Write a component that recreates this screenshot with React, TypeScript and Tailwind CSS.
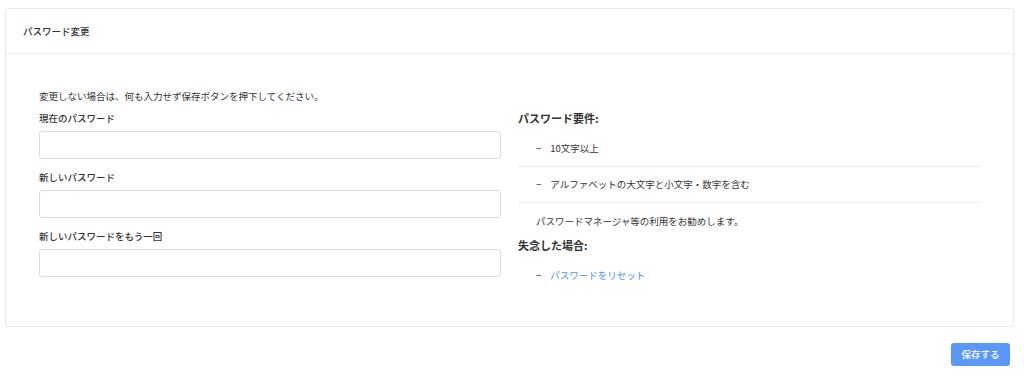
import React from 'react';

const font = { fontFamily: '"Noto Sans CJK JP", "Noto Sans", sans-serif' };

const PasswordField: React.FC<{ label: string }> = ({ label }) => (
  <div className="flex flex-col">
    <label className="h-[19px] flex items-center text-[9.5px] font-medium text-[#333]">{label}</label>
    <input
      type="password"
      className="mt-[3px] h-[28px] w-full rounded-[3px] border border-[#dcdcdc] bg-white px-2 text-[10px] outline-none"
    />
  </div>
);

export default function App() {
  return (
    <div className="min-h-[376px] w-[1024px] bg-white text-[#333]" style={font}>
      <div className="ml-[5px] mt-[8px] w-[1009px] rounded-[3px] border border-[#e8e8e8] bg-white">
        <div className="flex h-[45px] items-center border-b border-[#ececec] px-[17px]">
          <h2 className="text-[9.5px] font-medium text-[#333]">パスワード変更</h2>
        </div>

        <div className="px-[33px] pt-[35px] pb-[38px]">
          <p className="flex h-[14px] items-center text-[9.5px] text-[#333]">
            変更しない場合は、何も入力せず保存ボタンを押下してください。
          </p>

          <div className="mt-[6px] grid grid-cols-2 gap-[17px]">
            <div className="flex flex-col gap-[9px]">
              <PasswordField label="現在のパスワード" />
              <PasswordField label="新しいパスワード" />
              <PasswordField label="新しいパスワードをもう一回" />
            </div>

            <div className="flex flex-col">
              <h3 className="flex h-[19px] items-center text-[11px] font-semibold text-[#333]">パスワード要件:</h3>
              <ul className="mt-[3px]">
                <li className="flex h-[36px] items-center gap-[9px] border-b border-[#ececec] pl-[18px] text-[9.5px]">
                  <span>−</span>
                  <span>10文字以上</span>
                </li>
                <li className="flex h-[36px] items-center gap-[9px] border-b border-[#ececec] pl-[18px] text-[9.5px]">
                  <span>−</span>
                  <span>アルファベットの大文字と小文字・数字を含む</span>
                </li>
              </ul>
              <p className="flex h-[36px] items-center pl-[18px] text-[9.5px]">
                パスワードマネージャ等の利用をお勧めします。
              </p>
              <h3 className="-mt-[1px] flex h-[14px] items-center text-[11px] font-semibold text-[#333]">失念した場合:</h3>
              <div className="mt-[10px] flex h-[26px] items-center gap-[9px] pl-[18px] text-[9.5px]">
                <span>−</span>
                <a href="#" className="text-[#4f8ff7]">パスワードをリセット</a>
              </div>
            </div>
          </div>
        </div>
      </div>

      <div className="flex justify-end pr-[14px] pt-[16px]">
        <button className="h-[23px] w-[59px] rounded-[3px] bg-[#5b97f7] text-[9.5px] font-medium text-white">
          保存する
        </button>
      </div>
    </div>
  );
}
